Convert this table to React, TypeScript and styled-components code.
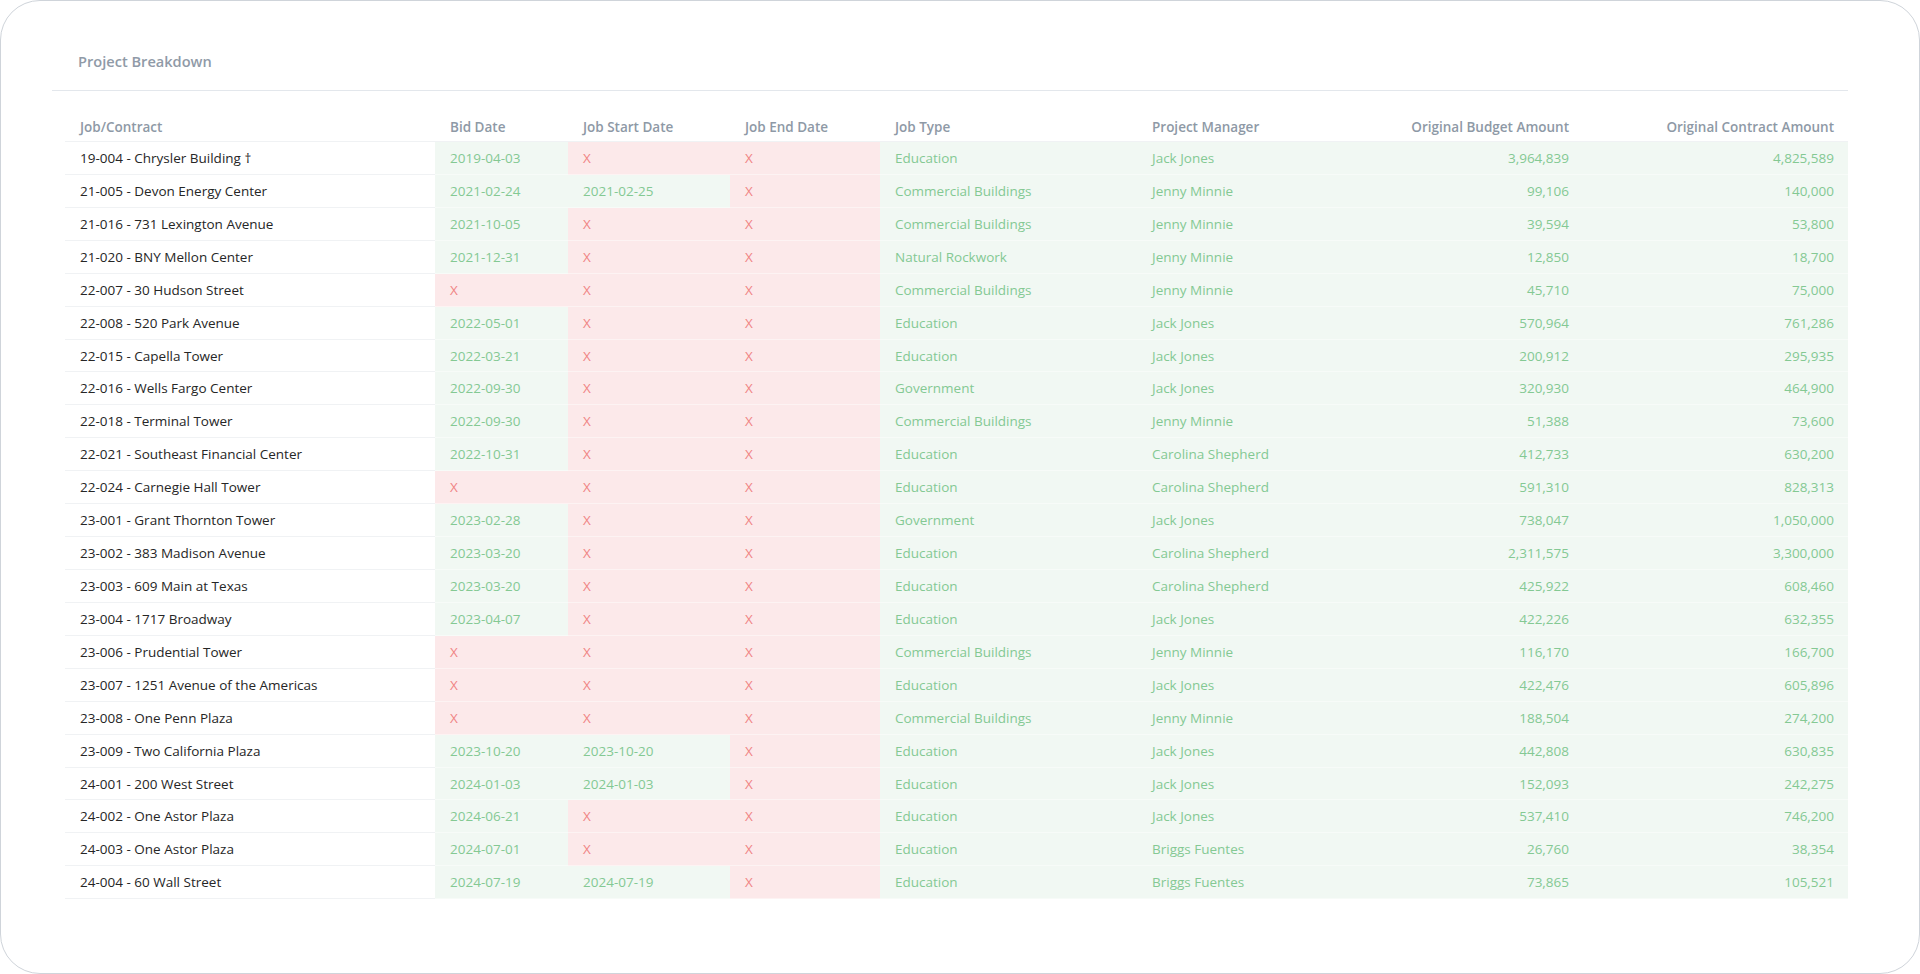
import React from "react";
import styled, { createGlobalStyle } from "styled-components";

const GlobalStyle = createGlobalStyle`
  html, body {
    margin: 0;
    padding: 0;
    background: #ffffff;
    font-family: "Open Sans", "Noto Sans", "Liberation Sans", sans-serif;
  }
  * { box-sizing: border-box; }
`;

const Card = styled.div`
  width: 1920px;
  height: 974px;
  border: 1px solid #cfd4da;
  border-radius: 40px;
  background: #ffffff;
  padding: 0 71px 0 51px;
  overflow: hidden;
`;

const TitleBar = styled.div`
  padding: 50px 26px 19px;
  border-bottom: 1px solid #e3e7ec;
`;

const Title = styled.h2`
  margin: 0;
  font-size: 14.6px;
  line-height: 20px;
  font-weight: 600;
  color: #909aa7;
`;

const Table = styled.table`
  margin: 21px 0 0 13px;
  width: 1783px;
  table-layout: fixed;
  border-collapse: separate;
  border-spacing: 0;
`;

const Th = styled.th<{ $w: number; $right?: boolean }>`
  width: ${(p) => p.$w}px;
  padding: 5px 14px 4px 15px;
  font-size: 13.5px;
  line-height: 20px;
  font-weight: 600;
  color: #8e99a6;
  text-align: ${(p) => (p.$right ? "right" : "left")};
  border-bottom: 1px solid #f0f2f4;
  white-space: nowrap;
`;

type Tone = "plain" | "good" | "bad";

const Td = styled.td<{ $tone: Tone; $right?: boolean }>`
  padding: 7px 14px 5px 15px;
  font-size: 13.5px;
  line-height: 19.92px;
  font-weight: 400;
  white-space: nowrap;
  overflow: hidden;
  text-align: ${(p) => (p.$right ? "right" : "left")};
  color: ${(p) =>
    p.$tone === "good" ? "#84c993" : p.$tone === "bad" ? "#f08484" : "#262626"};
  background: ${(p) =>
    p.$tone === "good" ? "#f1f8f3" : p.$tone === "bad" ? "#fce9ea" : "#ffffff"};
  border-bottom: 1px solid
    ${(p) => (p.$tone === "plain" ? "#f0f2f4" : "rgba(255,255,255,0.45)")};
`;

type Row = [string, string, string, string, string, string, string, string];

const rows: Row[] = [
  ["19-004 - Chrysler Building †", "2019-04-03", "X", "X", "Education", "Jack Jones", "3,964,839", "4,825,589"],
  ["21-005 - Devon Energy Center", "2021-02-24", "2021-02-25", "X", "Commercial Buildings", "Jenny Minnie", "99,106", "140,000"],
  ["21-016 - 731 Lexington Avenue", "2021-10-05", "X", "X", "Commercial Buildings", "Jenny Minnie", "39,594", "53,800"],
  ["21-020 - BNY Mellon Center", "2021-12-31", "X", "X", "Natural Rockwork", "Jenny Minnie", "12,850", "18,700"],
  ["22-007 - 30 Hudson Street", "X", "X", "X", "Commercial Buildings", "Jenny Minnie", "45,710", "75,000"],
  ["22-008 - 520 Park Avenue", "2022-05-01", "X", "X", "Education", "Jack Jones", "570,964", "761,286"],
  ["22-015 - Capella Tower", "2022-03-21", "X", "X", "Education", "Jack Jones", "200,912", "295,935"],
  ["22-016 - Wells Fargo Center", "2022-09-30", "X", "X", "Government", "Jack Jones", "320,930", "464,900"],
  ["22-018 - Terminal Tower", "2022-09-30", "X", "X", "Commercial Buildings", "Jenny Minnie", "51,388", "73,600"],
  ["22-021 - Southeast Financial Center", "2022-10-31", "X", "X", "Education", "Carolina Shepherd", "412,733", "630,200"],
  ["22-024 - Carnegie Hall Tower", "X", "X", "X", "Education", "Carolina Shepherd", "591,310", "828,313"],
  ["23-001 - Grant Thornton Tower", "2023-02-28", "X", "X", "Government", "Jack Jones", "738,047", "1,050,000"],
  ["23-002 - 383 Madison Avenue", "2023-03-20", "X", "X", "Education", "Carolina Shepherd", "2,311,575", "3,300,000"],
  ["23-003 - 609 Main at Texas", "2023-03-20", "X", "X", "Education", "Carolina Shepherd", "425,922", "608,460"],
  ["23-004 - 1717 Broadway", "2023-04-07", "X", "X", "Education", "Jack Jones", "422,226", "632,355"],
  ["23-006 - Prudential Tower", "X", "X", "X", "Commercial Buildings", "Jenny Minnie", "116,170", "166,700"],
  ["23-007 - 1251 Avenue of the Americas", "X", "X", "X", "Education", "Jack Jones", "422,476", "605,896"],
  ["23-008 - One Penn Plaza", "X", "X", "X", "Commercial Buildings", "Jenny Minnie", "188,504", "274,200"],
  ["23-009 - Two California Plaza", "2023-10-20", "2023-10-20", "X", "Education", "Jack Jones", "442,808", "630,835"],
  ["24-001 - 200 West Street", "2024-01-03", "2024-01-03", "X", "Education", "Jack Jones", "152,093", "242,275"],
  ["24-002 - One Astor Plaza", "2024-06-21", "X", "X", "Education", "Jack Jones", "537,410", "746,200"],
  ["24-003 - One Astor Plaza", "2024-07-01", "X", "X", "Education", "Briggs Fuentes", "26,760", "38,354"],
  ["24-004 - 60 Wall Street", "2024-07-19", "2024-07-19", "X", "Education", "Briggs Fuentes", "73,865", "105,521"],
];

const columns: { label: string; w: number; right?: boolean }[] = [
  { label: "Job/Contract", w: 370 },
  { label: "Bid Date", w: 133 },
  { label: "Job Start Date", w: 162 },
  { label: "Job End Date", w: 150 },
  { label: "Job Type", w: 257 },
  { label: "Project Manager", w: 163 },
  { label: "Original Budget Amount", w: 283, right: true },
  { label: "Original Contract Amount", w: 265, right: true },
];

const toneFor = (col: number, value: string): Tone => {
  if (col === 0) return "plain";
  if (value === "X") return "bad";
  return "good";
};

export default function App() {
  return (
    <>
      <GlobalStyle />
      <Card>
        <TitleBar>
          <Title>Project Breakdown</Title>
        </TitleBar>
        <Table>
          <thead>
            <tr>
              {columns.map((c) => (
                <Th key={c.label} $w={c.w} $right={c.right}>
                  {c.label}
                </Th>
              ))}
            </tr>
          </thead>
          <tbody>
            {rows.map((r) => (
              <tr key={r[0]}>
                {r.map((v, i) => (
                  <Td key={i} $tone={toneFor(i, v)} $right={columns[i].right}>
                    {v}
                  </Td>
                ))}
              </tr>
            ))}
          </tbody>
        </Table>
      </Card>
    </>
  );
}
